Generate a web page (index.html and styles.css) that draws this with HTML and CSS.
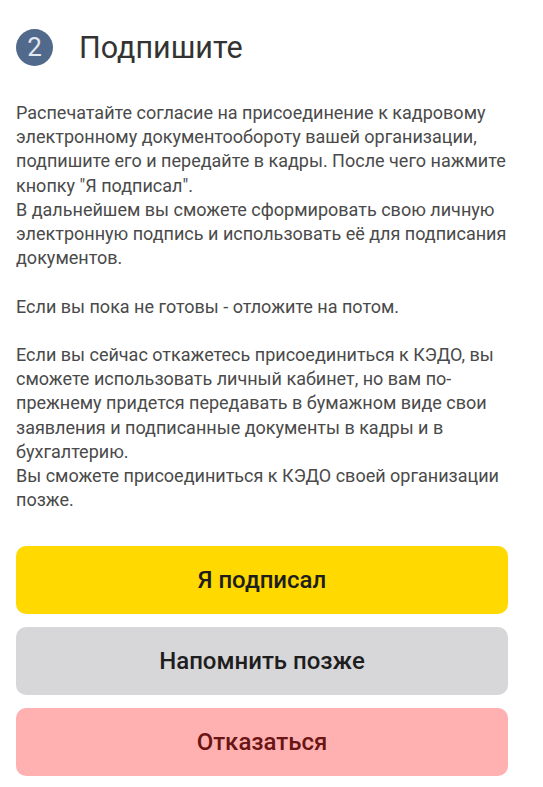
FILE: index.html
```html
<!DOCTYPE html>
<html lang="ru">
<head>
<meta charset="utf-8">
<link rel="stylesheet" href="styles.css">
</head>
<body>
<div class="page">
  <div class="header">
    <div class="step">2</div>
    <h1 class="title">Подпишите</h1>
  </div>
  <div class="text">Распечатайте согласие на присоединение к кадровому электронному документообороту вашей организации, подпишите его и передайте в кадры. После чего нажмите кнопку "Я подписал".
В дальнейшем вы сможете сформировать свою личную электронную подпись и использовать её для подписания документов.

Если вы пока не готовы - отложите на потом.

Если вы сейчас откажетесь присоединиться к КЭДО, вы сможете использовать личный кабинет, но вам по-прежнему придется передавать в бумажном виде свои заявления и подписанные документы в кадры и в бухгалтерию.
Вы сможете присоединиться к КЭДО своей организации позже.</div>
  <div class="actions">
    <button class="btn btn-primary">Я подписал</button>
    <button class="btn btn-secondary">Напомнить позже</button>
    <button class="btn btn-danger">Отказаться</button>
  </div>
</div>
</body>
</html>
```
FILE: styles.css
```css
html, body {
  margin: 0;
  padding: 0;
  background: #ffffff;
}
.page {
  width: 492px;
  padding: 29px 0 0 16px;
  font-family: Roboto, "Noto Sans", sans-serif;
}
.header {
  display: flex;
  align-items: center;
  gap: 26px;
  height: 37px;
}
.step {
  width: 37px;
  height: 37px;
  border-radius: 50%;
  background: #516a8c;
  color: #e4e8f0;
  font-size: 26px;
  line-height: 37px;
  text-align: center;
  flex: none;
}
.title {
  margin: 0;
  font-size: 30.5px;
  font-weight: 400;
  color: #333333;
  line-height: 37px;
}
.text {
  margin-top: 35px;
  font-size: 18px;
  line-height: 24.2px;
  color: #4a4a4a;
  white-space: pre-line;
}
.actions {
  margin-top: 34px;
  display: flex;
  flex-direction: column;
  gap: 13px;
}
.btn {
  display: block;
  width: 100%;
  height: 68px;
  border: none;
  border-radius: 10px;
  font-family: Roboto, "Noto Sans", sans-serif;
  font-size: 24px;
  font-weight: 500;
  color: #1e1e1e;
  padding: 0;
}
.btn-primary {
  background: #ffd900;
}
.btn-secondary {
  background: #d7d6d9;
}
.btn-danger {
  background: #feb1b0;
  color: #6a1414;
}
```
